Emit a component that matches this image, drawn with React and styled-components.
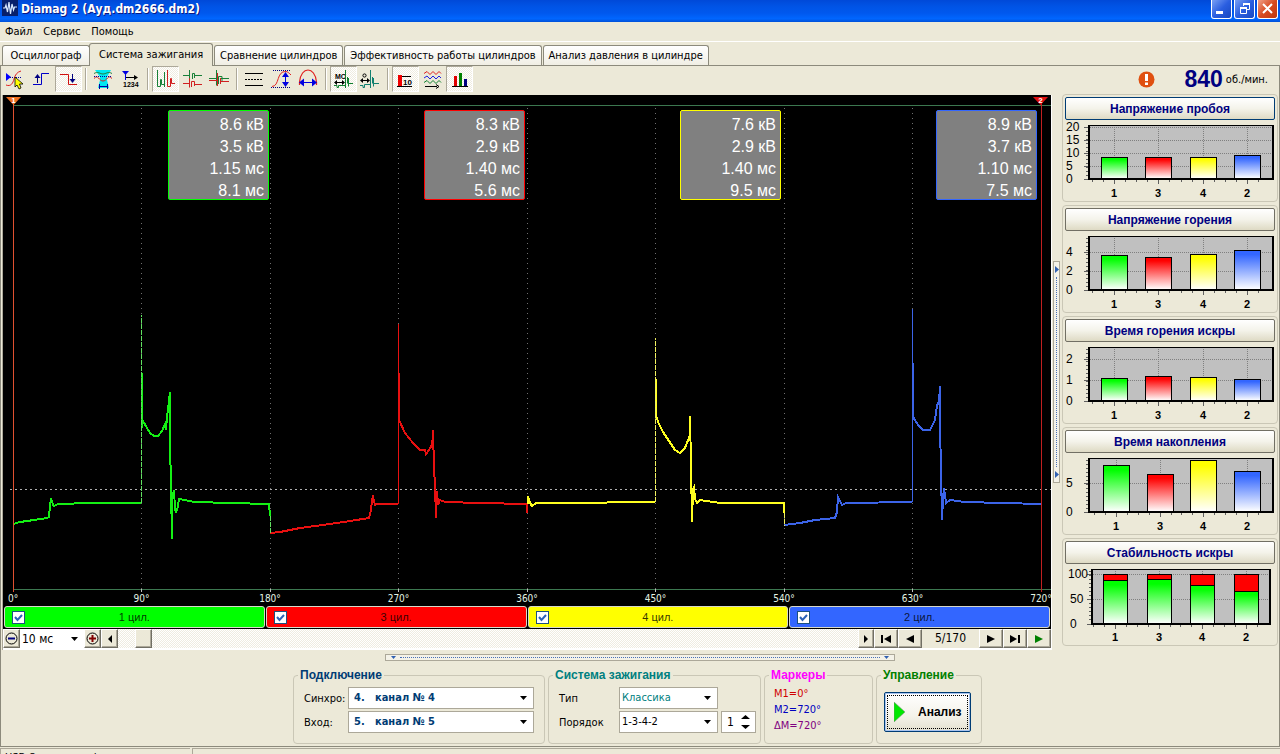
import React, { useState } from "react";
import styled, { createGlobalStyle, css } from "styled-components";

const GlobalStyle = createGlobalStyle`
  * { box-sizing: border-box; }
  body {
    margin: 0;
    background: #ece9d8;
    color: #000;
    font-family: "DejaVu Sans Condensed", "DejaVu Sans", sans-serif;
    font-size: 11px;
  }
  button, input, select { font-family: inherit; font-size: inherit; color: inherit; margin: 0; }
  svg { display: block; flex: none; }
`;

const GREEN = "#00ff00";
const RED = "#ff0000";
const YELLOW = "#ffff00";
const BLUE = "#3366ff";

const hatch = css`
  background: repeating-conic-gradient(#fff 0 25%, #efece0 0 50%) 0 0 / 2px 2px;
`;

const raised = css`
  background: #ece9d8;
  border: 1px solid;
  border-color: #fff #716f64 #716f64 #fff;
  box-shadow: inset -1px -1px 0 #aca899;
`;

const Window = styled.div`
  height: 100vh;
  min-height: 700px;
  display: flex;
  flex-direction: column;
  overflow: hidden;
`;

const TitleBar = styled.header`
  display: flex;
  align-items: flex-start;
  height: 22px;
  padding: 0 2px;
  background: linear-gradient(#0049d8 0, #0054e6 30%, #0058ee 60%, #0066ff 85%, #0050d8 100%);
`;

const Title = styled.h1`
  flex: 1;
  margin: 0 0 0 3px;
  color: #fff;
  font-size: 12px;
  line-height: 18px;
  text-shadow: 1px 1px 0 #0a1883;
`;

const WindowButtons = styled.div`
  display: flex;
  gap: 2px;
`;

const WindowButton = styled.button`
  width: 21px;
  height: 19px;
  padding: 0;
  border: 1px solid #fff;
  border-top: 0;
  border-radius: 0 0 3px 3px;
  background: ${(p) =>
    p.$close
      ? "linear-gradient(135deg, #f0a088, #d84a20 50%, #c03810)"
      : "linear-gradient(135deg, #7aa0f4, #2a5ee0 50%, #1848c0)"};
`;

const MenuBar = styled.nav`
  display: flex;
  align-items: center;
  gap: 11px;
  height: 20px;
  padding: 0 5px;
  border-bottom: 1px solid #fff;
`;

const MenuLink = styled.a`
  color: #000;
  text-decoration: none;
`;

const Tabs = styled.div`
  display: flex;
  align-items: flex-end;
  height: 23px;
  padding-left: 2px;
`;

const Tab = styled.button`
  min-width: 88px;
  height: 20px;
  padding: 0 5px;
  margin-right: 1px;
  border: 1px solid #8c8a7c;
  border-bottom: 0;
  border-radius: 3px 3px 0 0;
  background: linear-gradient(#fff, #f0eee4);
  white-space: nowrap;
  ${(p) =>
    p.$active &&
    css`
      z-index: 1;
      height: 23px;
      padding: 0 9px 2px;
      margin: 0 1px -1px -2px;
      background: #ece9d8;
    `}
`;

const Page = styled.main`
  flex: 1;
  min-height: 0;
  display: flex;
  flex-direction: column;
  border: 1px solid #8c8a7c;
`;

const Toolbar = styled.div`
  display: flex;
  height: 28px;
  padding-right: 11px;
`;

const ToolButton = styled.button`
  width: 27px;
  height: 26px;
  padding: 0;
  border: 1px solid transparent;
  background: none;
  ${(p) =>
    p.$pressed &&
    css`
      ${hatch}
      border-color: #aca899 #fff #fff #aca899;
    `}
  svg { margin: -1px; }
`;

const Separator = styled.span`
  width: 2px;
  height: 22px;
  margin: 2px 3px;
  border-left: 1px solid #aca899;
  border-right: 1px solid #fff;
`;

const Rpm = styled.div`
  display: flex;
  align-items: center;
  height: 26px;
  margin-left: auto;
`;

const RpmValue = styled.strong`
  margin: 0 3px 0 29px;
  color: #000080;
  font: bold 23px "Liberation Sans", sans-serif;
`;

const Workspace = styled.div`
  display: flex;
`;

const ScopeColumn = styled.section`
  flex: 1;
  min-width: 0;
  margin-top: 1px;
  margin-left: 1px;
  border-left: 1px solid #aca899;
  border-right: 1px solid #fff;
`;

const Scope = styled.div`
  position: relative;
  background: #000;
  overflow: hidden;
`;

const Plot = styled.svg`
  width: 100%;
  height: 497px;
`;

const Readouts = styled.div`
  position: absolute;
  top: 15px;
  left: 10px;
  right: 14px;
  display: grid;
  grid-template-columns: repeat(4, 1fr);
  justify-items: end;
`;

const Readout = styled.div`
  width: 101px;
  height: 90px;
  padding: 3px 4px 0 0;
  border: 1px solid ${(p) => p.$color};
  border-radius: 2px;
  background: #808080;
  color: #fff;
  text-align: right;
  font: 16px/22px "Liberation Sans", sans-serif;
`;

const AxisLabels = styled.div`
  display: flex;
  justify-content: space-between;
  height: 14px;
  padding: 0 10px;
  color: #e4f4e4;
  font-size: 10px;
  line-height: 14px;
`;

const AxisLabel = styled.span`
  display: flex;
  justify-content: center;
  width: 0;
`;

const MarkerFlag = styled.span`
  position: absolute;
  top: 2px;
  ${(p) => (p.$right ? "right: 3px" : "left: 3px")};
  width: 15px;
  height: 8px;
  clip-path: polygon(0 0, 100% 0, 50% 100%);
  background: ${(p) => p.$color};
  color: #fff;
  font: bold 8px/7px "Liberation Sans", sans-serif;
  text-align: center;
`;

const Cylinders = styled.div`
  display: grid;
  grid-template-columns: repeat(4, 1fr);
  gap: 1px;
  padding: 0 1px 1px;
`;

const Cylinder = styled.label`
  display: flex;
  align-items: center;
  height: 22px;
  padding: 0 20px 0 7px;
  border: 1px solid #d8d8c8;
  border-radius: 3px;
  background: ${(p) => p.$color};
  color: rgba(0, 0, 0, 0.8);
  span { flex: 1; text-align: center; font: 11px "Liberation Sans", sans-serif; }
`;

const Check = styled.input`
  appearance: none;
  width: 13px;
  height: 13px;
  border: 1px solid #1c5180;
  background: #fff;
  &:checked {
    background: #fff url("data:image/svg+xml,%3Csvg xmlns='http://www.w3.org/2000/svg' width='11' height='11'%3E%3Cpath d='M2 5 L4.5 8 L9 3' fill='none' stroke='%232c62b8' stroke-width='2'/%3E%3C/svg%3E") center no-repeat;
  }
`;

const ScrollRow = styled.div`
  display: flex;
  height: 21px;
  padding-bottom: 2px;
  background: #fff;
`;

const StepButton = styled.button`
  display: flex;
  align-items: center;
  justify-content: center;
  width: ${(p) => p.$width}px;
  padding: 0;
  ${raised}
`;

const arrow = css`
  appearance: none;
  background: #fff url("data:image/svg+xml,%3Csvg xmlns='http://www.w3.org/2000/svg' width='7' height='4'%3E%3Cpath d='M0 0 H7 L3.5 4 Z'/%3E%3C/svg%3E") right 6px center no-repeat;
`;

const ScaleSelect = styled.select`
  ${arrow}
  width: 64px;
  padding: 0 2px;
  border: 0;
  font-size: 12px;
`;

const FrameSlider = styled.input`
  appearance: none;
  flex: 1;
  min-width: 0;
  height: 19px;
  ${hatch}
  &::-webkit-slider-thumb {
    appearance: none;
    width: 17px;
    height: 19px;
    ${raised}
  }
`;

const FrameCounter = styled.output`
  width: 57px;
  background: #ece9d8;
  text-align: center;
  font-size: 12px;
  line-height: 19px;
`;

const SideSplitter = styled.div`
  display: flex;
  flex-direction: column;
  justify-content: space-between;
  align-items: center;
  align-self: center;
  width: 7px;
  height: 222px;
  margin: 0 2px 0 1px;
  padding: 4px 0;
  border: 1px solid #aca899;
  background: #f4f2e8;
`;

const SideDots = styled.i`
  flex: 1;
  margin: 4px 0;
  border-left: 1px dotted #4870b8;
`;

const BottomSplitter = styled.div`
  display: flex;
  align-items: center;
  align-self: center;
  width: 510px;
  height: 7px;
  margin-top: 4px;
  padding: 0 5px;
  border: 1px solid #aca899;
  background: #f4f2e8;
`;

const BottomDots = styled.i`
  flex: 1;
  margin: 0 4px;
  border-top: 1px dotted #4870b8;
`;

const Sidebar = styled.aside`
  display: flex;
  flex-direction: column;
  gap: 3px;
  width: 216px;
  margin-right: 1px;
`;

const ChartCard = styled.section`
  height: 108px;
  padding: 2px;
  border: 1px solid #cac7b6;
  border-radius: 4px;
`;

const ChartButton = styled.button`
  display: block;
  width: 100%;
  height: 23px;
  padding: 0;
  border: 1px solid ${(p) => (p.$focused ? "#003c74" : "#716f64")};
  border-radius: 2px;
  background: linear-gradient(#fff, #f4f3ea 50%, #dedac4);
  color: #000080;
  font: bold 12px "Liberation Sans", sans-serif;
`;

const ChartText = styled.text`
  font: ${(p) => (p.$bold ? "bold 11px" : "12px")} "Liberation Sans", sans-serif;
`;

const Groups = styled.div`
  display: flex;
  justify-content: center;
  gap: 3px;
  margin-top: 8px;
  padding-right: 5px;
`;

const Group = styled.fieldset`
  width: ${(p) => p.$width}px;
  height: 75px;
  margin: 0;
  padding: 6px 10px 0;
  border: 1px solid #cac7b6;
  border-radius: 4px;
  legend {
    margin-left: -6px;
    padding: 0 2px;
    color: ${(p) => p.$color};
    font: bold 12px/12px "Liberation Sans", sans-serif;
  }
`;

const Field = styled.div`
  display: flex;
  align-items: center;
  height: 22px;
  margin-bottom: 2px;
  label { flex: 1; white-space: nowrap; }
`;

const Select = styled.select`
  ${arrow}
  width: ${(p) => p.$width}px;
  height: 22px;
  padding: 0 2px 2px ${(p) => (p.$bold ? 5 : 2)}px;
  border: 1px solid #aca899;
  border-radius: 0;
  color: ${(p) => p.$color};
  font-size: 11px;
  font-weight: ${(p) => (p.$bold ? "bold" : "normal")};
  white-space: pre;
`;

const Spin = styled.div`
  display: flex;
  align-items: center;
  width: 35px;
  height: 22px;
  margin: 0 -6px 0 3px;
  border: ${(p) => (p.$empty ? 0 : "1px solid #aca899")};
  background: ${(p) => (p.$empty ? "none" : "#fff")};
  input {
    appearance: textfield;
    flex: 1;
    min-width: 0;
    width: 17px;
    padding: 0 0 0 5px;
    border: 0;
    background: none;
    font-size: 12px;
    outline: 0;
  }
  input::-webkit-inner-spin-button { display: none; }
  svg { margin-right: 5px; }
`;

const MarkerValue = styled.p`
  margin: -1px 0 2px -1px;
  color: ${(p) => p.$color};
  line-height: 15px;
`;

const RunButton = styled.button`
  display: flex;
  align-items: center;
  gap: 13px;
  width: 87px;
  height: 40px;
  margin: 5px 0 0 -3px;
  padding: 0 9px;
  border: 1px solid #003c74;
  border-radius: 2px;
  background: linear-gradient(#fff, #f4f3ea 60%, #e4e1d0);
  box-shadow: inset 0 0 0 1px #a8c4f0;
  outline: 1px dotted #000;
  outline-offset: -4px;
  font: bold 12px "Liberation Sans", sans-serif;
`;

const StatusBar = styled.footer`
  display: grid;
  grid-template-columns: 190px 1fr;
  gap: 2px;
  height: 6px;
  margin-top: 1px;
`;

const StatusCell = styled.span`
  height: 18px;
  padding-left: 4px;
  border-top: 1px solid #aca899;
  border-left: 1px solid #aca899;
  line-height: 18px;
`;

const AppLogo = () => (
  <svg width="16" height="16" viewBox="0 0 16 16">
    <rect width="16" height="16" fill="#08206c" />
    <path d="M1 8 H3 L4 5 L5.5 12 L7 2 L8.5 14 L10 4 L11.5 10 L12.5 7 H15" fill="none" stroke="#d8e8ff" strokeWidth="1.2" />
  </svg>
);

const icons = {
  sync: (
    <>
      <path d="M5 7 V15 L10 11 Z" fill="#0000ff" />
      <path d="M9 11.5 H21" stroke="#0000a0" strokeDasharray="1 1" />
      <path d="M5 19 C10 21 12 17 13 13 S16 6 20 5" stroke="#e02020" fill="none" />
      <path d="M14 11 V21 L16 19 L18 23 L20 22 L18.5 18 H22 Z" fill="#ffff00" stroke="#000" strokeWidth=".8" />
    </>
  ),
  rise: (
    <>
      <path d="M5 18.5 H13.5 V7.5 H21" stroke="#0000c8" fill="none" />
      <path d="M9.5 17 V9" stroke="#000080" /><path d="M6.5 12 L9.5 8 L12.5 12 Z" fill="#000080" />
    </>
  ),
  fall: (
    <>
      <path d="M5 8.5 H13.5 V18.5 H22" stroke="#d01010" fill="none" />
      <path d="M17.5 8 V16" stroke="#000080" /><path d="M14.5 13 L17.5 17 L20.5 13 Z" fill="#000080" />
    </>
  ),
  funnel: (
    <>
      <path d="M5 4 H21 L17 11 V14 L19 22 H8 L10 14 V11 Z" fill="#00e8f0" />
      <path d="M4 7.5 C8 5 10 8 13 8 S18 5 22 7.5" stroke="#208040" fill="none" />
      <path d="M4 12.5 C8 8 9 15 13 15 S18 8 22 12.5" stroke="#d02020" fill="none" />
      <path d="M4 10.5 H22" stroke="#0000a0" strokeDasharray="1 1" />
      <path d="M9 20.5 H18 M9.5 18 V23 M17.5 18 V23" stroke="#0000a0" />
    </>
  ),
  order: (
    <>
      <path d="M5 5 H12 L8.5 9 Z" fill="#0000e0" />
      <path d="M8.5 7 V14" stroke="#0000e0" />
      <path d="M9 11.5 H18" stroke="#000" /><path d="M17 9 L21 11.5 L17 14 Z" />
      <text x="6" y="21" fontSize="7" fontFamily="Liberation Sans" fontWeight="bold">1234</text>
    </>
  ),
  sequence: (
    <>
      <path d="M5.5 4 V20.5 H8.5 V13.5 H9.5 V18.5 H12.5 V6 V21" stroke="#188038" fill="none" />
      <path d="M15.5 4 V20.5 H18.5 V12.5 H19.5 V17.5 H23" stroke="#d02020" fill="none" />
    </>
  ),
  parade: (
    <>
      <path d="M4 9.5 H10.5 V4 V13.5 M13.5 13 V7.5 H15.5 V12 M15 9.5 H23" stroke="#188038" fill="none" />
      <path d="M4 17.5 H10.5 V12.5 V21.5 M12.5 21 V15.5 H15.5 V20 M15 18.5 H23" stroke="#d02020" fill="none" />
    </>
  ),
  overlay: (
    <>
      <path d="M3 12.5 H10.5 V4 V19.5 M12.5 18 V10.5 H16 V15 M15 12.5 H23" stroke="#188038" fill="none" />
      <path d="M3 14.5 H11.5 V7 V20 M14.5 18 V12 M14 15.5 H23" stroke="#d02020" fill="none" />
    </>
  ),
  lines: (
    <>
      <path d="M4 7.5 H22 M4 19.5 H22" stroke="#000" />
      <path d="M4 13.5 H22" stroke="#000" strokeDasharray="2 1" />
    </>
  ),
  height: (
    <>
      <path d="M4 20.5 C12 20 8 5 18 5.5 C20 6 21 7 23 9" stroke="#e02020" fill="none" />
      <path d="M5 4.5 H22 M3 21.5 H22" stroke="#000080" strokeDasharray="1 1" />
      <path d="M17.5 8 V19" stroke="#0000e0" />
      <path d="M14 11 L17.5 6 L21 11 Z M14 16 L17.5 21 L21 16 Z" fill="#0000e0" />
    </>
  ),
  width: (
    <>
      <path d="M4.5 19 V16 C6 0 20 0 21.5 16 V19" stroke="#e02020" fill="none" strokeWidth="1.2" />
      <path d="M8 16.5 H18" stroke="#0000e0" />
      <path d="M9 12.5 L4 16.5 L9 20.5 Z M17 12.5 L22 16.5 L17 20.5 Z" fill="#0000e0" />
    </>
  ),
  duration: (
    <>
      <text x="5" y="13" fontSize="7" fontFamily="Liberation Sans" fontWeight="bold">МС</text>
      <path d="M6 16.5 H14" stroke="#000" /><path d="M7 14 L4 16.5 L7 19 Z M12 14 L15 16.5 L12 19 Z" />
      <path d="M4 19.5 H7 V21.5 H8.5 V19.5 H15.5 V4 V22 M17.5 11 V17.5 M18.5 12 V20.5 M19 17.5 H23" stroke="#108030" fill="none" />
    </>
  ),
  angle: (
    <>
      <circle cx="7.5" cy="9.5" r="1.6" stroke="#000" fill="none" />
      <path d="M5 14.5 H11" stroke="#000" /><path d="M6 12 L3 14.5 L6 17 Z M10 12 L13 14.5 L10 17 Z" />
      <path d="M3 19.5 H6 V21.5 H7.5 V18.5 H13.5 V4 V22 M15.5 11 V17.5 M16.5 12 V20.5 M17 17.5 H22" stroke="#108070" fill="none" />
    </>
  ),
  ten: (
    <>
      <rect x="6" y="9" width="4" height="11" fill="#f00000" />
      <path d="M10 10.5 H19 M5 20.5 H20" stroke="#000" />
      <text x="11" y="19" fontSize="8" fontFamily="Liberation Sans" fontWeight="bold">10</text>
    </>
  ),
  waves: (
    <>
      <path d="M5 7.5 L8 5.5 L11 8.5 L14 5.5 L17 8.5 L20 5.5 L22 7.5" stroke="#e02020" fill="none" />
      <path d="M5 12 L8 10 L11 13 L14 10 L17 13 L20 10 L22 12" stroke="#2020e0" fill="none" />
      <path d="M5 16.5 L8 14.5 L11 17.5 L14 14.5 L17 17.5 L20 14.5 L22 16.5" stroke="#108030" fill="none" />
      <path d="M6 20.5 H18 M17 18.5 L20 20.5 L17 22.5" stroke="#000" fill="none" />
    </>
  ),
  bars: (
    <>
      <rect x="8" y="10" width="3" height="10" fill="#e00000" />
      <rect x="13" y="7" width="3" height="13" fill="#008000" />
      <rect x="18" y="13" width="3" height="7" fill="#000080" />
      <path d="M6 20.5 H22" stroke="#000" />
    </>
  ),
};

const toolGroups = [
  [["sync", "Синхронизация"], ["rise", "Фронт"], ["fall", "Спад", true]],
  [["funnel", "Фильтр"], ["order", "Порядок"]],
  [["sequence", "Последовательно", true], ["parade", "Растр"], ["overlay", "Наложение"]],
  [["lines", "Линии"], ["height", "Амплитуда"], ["width", "Ширина"]],
  [["duration", "Миллисекунды", true], ["angle", "Градусы"]],
  [["ten", "Значения", true], ["waves", "Осциллограммы"], ["bars", "Диаграммы", true]],
];

const tabs = [
  "Осциллограф",
  "Система зажигания",
  "Сравнение цилиндров",
  "Эффективность работы цилиндров",
  "Анализ давления в цилиндре",
];

const cylinders = [
  { name: "1 цил.", color: GREEN, values: ["8.6 кВ", "3.5 кВ", "1.15 мс", "8.1 мс"] },
  { name: "3 цил.", color: RED, values: ["8.3 кВ", "2.9 кВ", "1.40 мс", "5.6 мс"] },
  { name: "4 цил.", color: YELLOW, values: ["7.6 кВ", "2.9 кВ", "1.40 мс", "9.5 мс"] },
  { name: "2 цил.", color: BLUE, values: ["8.9 кВ", "3.7 кВ", "1.10 мс", "7.5 мс"] },
];

const traces = [
  { color: "#14f014", d: "M13 524 L20 522 L34 520 L47 518 L49 517 L50 506 L51 498 L53 505 L54 506 L58 504 L90 503 H141 M142 373 V428 L143 421 L147 428 L150 433 L154 436 L158 436 L162 431 L165 424 L166 430 L167 417 L169 401 L170 392 L170 440 L171 488 L172 539 V500 L174 490 L175 508 L176 513 L178 506 L179 499 L195 502 L230 503 L269 504 L270 516" },
  { color: "#e81010", d: "M270 533 L280 532 L300 528 L330 524 L350 521 L369 518 L371 510 L372 500 L373 497 L375 505 L377 504 H398 M399 373 V420 L405 433 L413 443 L420 450 H425 L426 454 L431 447 L433 438 V430 L434 468 L435 485 L436 518 L437 491 L438 505 L440 500 L445 502 L480 503 L527 504 V513" },
  { color: "#ffff20", d: "M528 504 V496 L530 503 L532 506 L536 503 L560 503 L655 502 M656 379 V415 L658 422 L663 432 L669 441 L675 450 L680 453 L685 448 L690 435 V416 L691 465 L692 522 L693 489 L694 487 L695 499 L697 503 L700 500 L720 503 L784 503 V513" },
  { color: "#3c64e8", d: "M784 525 L800 523 L815 520 L835 518 L837 512 L838 497 L840 501 L842 505 L846 503 L912 502 M913 363 V415 L914 419 L919 426 L923 430 H930 L935 420 L937 405 L939 402 L940 386 V425 L941 470 L942 520 L943 498 L944 488 L946 503 L950 500 L965 502 L1041 504" },
];

// one pixel wide ignition peaks and cylinder changes
const spikes = [
  { color: "#60e060", d: "M141.5 503 V315 M270.5 516 V533", dash: "5 1" },
  { color: "#e81010", d: "M398.5 504 V324" },
  { color: "#f0f060", d: "M655.5 502 V338 M784.5 513 V526", dash: "5 1" },
  { color: "#3c64e8", d: "M912.5 502 V309" },
];

const degrees = [0, 90, 180, 270, 360, 450, 540, 630, 720];
const gridX = [141, 270, 398, 527, 655, 784, 912];

const charts = [
  { title: "Напряжение пробоя", unit: 2.6, ticks: [0, 5, 10, 15, 20], values: [8.6, 8.6, 8.6, 9.2], centers: [49, 93, 138, 182] },
  { title: "Напряжение горения", unit: 9.5, ticks: [0, 2, 4], values: [3.7, 3.5, 3.8, 4.2], centers: [49, 93, 138, 182] },
  { title: "Время горения искры", unit: 21, ticks: [0, 1, 2], values: [1.1, 1.2, 1.15, 1.05], centers: [49, 93, 138, 182] },
  { title: "Время накопления", unit: 5.8, ticks: [0, 5], values: [8.1, 6.6, 9, 7.1], centers: [51, 95, 138, 182] },
  { title: "Стабильность искры", unit: 0.5, ticks: [0, 50, 100], values: [88, 90, 78, 66], centers: [50, 94, 137, 181], stacked: true },
];

function Chart({ unit, ticks, values, centers, stacked }) {
  const left = stacked ? 26 : 23;
  const right = stacked ? 205 : 208;
  const bottom = stacked ? 60 : 59;
  const barWidth = stacked ? 24 : 26;
  const y = (v) => Math.round(bottom - v * unit);
  return (
    <svg width="210" height="79" shapeRendering="crispEdges">
      <rect x={left} y="5" width={right - left} height={bottom - 5} fill="#c0c0c0" />
      {ticks.map((t) => (
        <g key={t}>
          <path d={`M${left} ${y(t) + 0.5} H${right}`} stroke="#808080" strokeDasharray="1 1" />
          <path d={`M${left - 4} ${y(t) + 0.5} h4`} stroke="#606060" />
          <ChartText x={stacked ? (t === 100 ? 3 : 5) : 1} y={y(t) + 4}>{t}</ChartText>
        </g>
      ))}
      {centers.map((x) => (
        <path key={x} d={`M${x + 0.5} 5 V${bottom}`} stroke="#808080" strokeDasharray="1 1" />
      ))}
      {values.map((v, i) => (
        <g key={i} stroke="#000">
          {stacked && (
            <rect x={centers[i] - 11.5} y={y(100) + 0.5} width={barWidth} height="49" fill={RED} />
          )}
          <rect
            x={centers[i] - barWidth / 2 + 0.5}
            y={y(v) + 0.5}
            width={barWidth}
            height={bottom - 1 - y(v)}
            fill={`url(#bar${stacked ? 0 : i})`}
          />
        </g>
      ))}
      <path d={`M${left} 5.5 H${right}`} stroke="#000" />
      <path
        d={`M${left + 1} 5 V${bottom + 1} M${right} 5 V${bottom + 1} M${left} ${bottom} H${right + 1}`}
        stroke="#000"
        strokeWidth="2"
      />
      <path d={`M${left - 1} 7 V${bottom - 1}`} stroke="#606060" strokeWidth="2" strokeDasharray="1 3" />
      {centers.map((x, i) => (
        <g key={x} transform={`translate(${x} ${bottom + 1})`}>
          <path d="M-21.5 0 v2 M-10.5 0 v2 M.5 0 v4 M11.5 0 v2" stroke="#606060" />
          <ChartText $bold x="0" y={77 - bottom - 1} textAnchor="middle">{[1, 3, 4, 2][i]}</ChartText>
        </g>
      ))}
    </svg>
  );
}

const Gradients = () => (
  <svg width="0" height="0" style={{ position: "absolute" }}>
    {[GREEN, RED, YELLOW, BLUE].map((c, i) => (
      <linearGradient key={c} id={`bar${i}`} x2="0" y2="1">
        <stop offset=".1" stopColor={c} />
        <stop offset="1" stopColor="#fff" />
      </linearGradient>
    ))}
  </svg>
);

const Glyph = ({ d, fill = "#000" }) => (
  <svg width="12" height="10"><path d={d} fill={fill} /></svg>
);

const Zoom = ({ plus }) => (
  <svg width="13" height="13">
    <circle cx="6.5" cy="6.5" r="5.5" fill="none" stroke="#000" />
    <path d={plus ? "M3 6.5 H10 M6.5 3 V10" : "M3 6.5 H10"} stroke={plus ? "#800000" : "#000080"} strokeWidth="2" />
  </svg>
);

const SplitArrow = ({ d }) => (
  <svg width="5" height="7"><path d={d} fill="#3060b0" /></svg>
);

export default function App() {
  const [tab, setTab] = useState(1);
  const [frame, setFrame] = useState(5);

  return (
    <Window>
      <GlobalStyle />
      <Gradients />
      <TitleBar>
        <AppLogo />
        <Title>Diamag 2 (Ауд.dm2666.dm2)</Title>
        <WindowButtons>
          <WindowButton aria-label="Свернуть">
            <svg width="19" height="18"><path d="M4 12.5 H11" stroke="#fff" strokeWidth="3" /></svg>
          </WindowButton>
          <WindowButton aria-label="Развернуть">
            <svg width="19" height="18" fill="none" stroke="#fff">
              <path d="M8.5 6 V3.5 H14.5 V9.5 H12" /><path d="M8 4 H15" strokeWidth="2" />
              <path d="M5.5 7.5 H11.5 V13.5 H5.5 Z" /><path d="M5 8 H12" strokeWidth="2" />
            </svg>
          </WindowButton>
          <WindowButton $close aria-label="Закрыть">
            <svg width="19" height="18"><path d="M5 4 L14 13 M14 4 L5 13" stroke="#fff" strokeWidth="2" /></svg>
          </WindowButton>
        </WindowButtons>
      </TitleBar>
      <MenuBar>
        <MenuLink href="#file">Файл</MenuLink>
        <MenuLink href="#service">Сервис</MenuLink>
        <MenuLink href="#help">Помощь</MenuLink>
      </MenuBar>
      <Tabs>
        {tabs.map((name, i) => (
          <Tab key={name} $active={i === tab} onClick={() => setTab(i)}>{name}</Tab>
        ))}
      </Tabs>
      <Page>
        <Toolbar>
          {toolGroups.map((group, g) => (
            <React.Fragment key={g}>
              {g > 0 && <Separator />}
              {group.map(([icon, label, pressed]) => (
                <ToolButton key={icon} $pressed={pressed} aria-label={label}>
                  <svg width="27" height="26">{icons[icon]}</svg>
                </ToolButton>
              ))}
            </React.Fragment>
          ))}
          <Rpm>
            <svg width="17" height="17">
              <circle cx="8.5" cy="8.5" r="8" fill="#e05010" />
              <path d="M8.5 3 V10 M8.5 11.5 V14" stroke="#fff" strokeWidth="3" />
            </svg>
            <RpmValue>840</RpmValue>
            об./мин.
          </Rpm>
        </Toolbar>
        <Workspace>
          <ScopeColumn>
            <Scope>
              <Plot viewBox="3 95 1048 497" preserveAspectRatio="none" shapeRendering="crispEdges">
                <path d="M13 105.5 H1051 M13 589.5 H1051" stroke="#3c7850" />
                {gridX.map((x) => (
                  <g key={x}>
                    <path d={`M${x + 0.5} 108 V589`} stroke="#707070" strokeDasharray="1 4" />
                    <path d={`M${x + 0.5} 589 V592`} stroke="#c0c0c0" />
                  </g>
                ))}
                <path d="M10 489.5 H1051" stroke="#b0b0b0" strokeDasharray="2 3" />
                {traces.map((t) => (
                  <path key={t.color} d={t.d} stroke={t.color} strokeWidth="2" fill="none" />
                ))}
                {spikes.map((t) => (
                  <path key={t.color} d={t.d} stroke={t.color} strokeDasharray={t.dash} fill="none" />
                ))}
                <path d="M13.5 97 V592" stroke="#e05030" />
                <path d="M1041.5 97 V592" stroke="#c02020" />
              </Plot>
              <MarkerFlag $color="#f07020">1</MarkerFlag>
              <MarkerFlag $color="#e01010" $right>2</MarkerFlag>
              <Readouts>
                {cylinders.map((c) => (
                  <Readout key={c.name} $color={c.color}>
                    {c.values.map((v) => <div key={v}>{v}</div>)}
                  </Readout>
                ))}
              </Readouts>
              <AxisLabels>
                {degrees.map((d) => <AxisLabel key={d}>{d}°</AxisLabel>)}
              </AxisLabels>
              <Cylinders>
                {cylinders.map((c) => (
                  <Cylinder key={c.name} $color={c.color}>
                    <Check type="checkbox" defaultChecked />
                    <span>{c.name}</span>
                  </Cylinder>
                ))}
              </Cylinders>
            </Scope>
            <ScrollRow>
              <StepButton $width={17} aria-label="Уменьшить"><Zoom /></StepButton>
              <ScaleSelect aria-label="Масштаб"><option>10 мс</option></ScaleSelect>
              <StepButton $width={17} aria-label="Увеличить"><Zoom plus /></StepButton>
              <StepButton $width={17} aria-label="Влево"><Glyph d="M8 1 V9 L4 5 Z" /></StepButton>
              <FrameSlider
                type="range"
                min="1"
                max="170"
                value={frame}
                onChange={(e) => setFrame(e.target.value)}
                aria-label="Кадр"
              />
              <StepButton $width={16} aria-label="Вправо"><Glyph d="M4 1 V9 L8 5 Z" /></StepButton>
              <StepButton $width={24} aria-label="Первый" onClick={() => setFrame(1)}>
                <Glyph d="M1 1 H3 V9 H1 Z M11 1 V9 L4 5 Z" />
              </StepButton>
              <StepButton $width={24} aria-label="Предыдущий"><Glyph d="M10 1 V9 L2 5 Z" /></StepButton>
              <FrameCounter>{frame}/170</FrameCounter>
              <StepButton $width={24} aria-label="Следующий"><Glyph d="M2 1 V9 L10 5 Z" /></StepButton>
              <StepButton $width={24} aria-label="Последний" onClick={() => setFrame(170)}>
                <Glyph d="M9 1 H11 V9 H9 Z M1 1 V9 L8 5 Z" />
              </StepButton>
              <StepButton $width={24} aria-label="Воспроизвести">
                <Glyph d="M2 1 V9 L10 5 Z" fill="#008000" />
              </StepButton>
            </ScrollRow>
          </ScopeColumn>
          <SideSplitter>
            <SplitArrow d="M1 0 V7 L5 3.5 Z" />
            <SideDots />
            <SplitArrow d="M1 0 V7 L5 3.5 Z" />
          </SideSplitter>
          <Sidebar>
            {charts.map((c, i) => (
              <ChartCard key={c.title}>
                <ChartButton $focused={i === 0}>{c.title}</ChartButton>
                <Chart {...c} />
              </ChartCard>
            ))}
          </Sidebar>
        </Workspace>
        <BottomSplitter>
          <SplitArrow d="M0 2 H5 L2.5 5 Z" />
          <BottomDots />
          <SplitArrow d="M0 2 H5 L2.5 5 Z" />
        </BottomSplitter>
        <Groups>
          <Group $width={252} $color="#003c74">
            <legend>Подключение</legend>
            <Field>
              <label htmlFor="sync">Синхро:</label>
              <Select id="sync" $width={186} $bold $color="#003c74"><option>4.&nbsp;&nbsp; канал № 4</option></Select>
            </Field>
            <Field>
              <label htmlFor="input">Вход:</label>
              <Select id="input" $width={186} $bold $color="#003c74"><option>5.&nbsp;&nbsp; канал № 5</option></Select>
            </Field>
          </Group>
          <Group $width={213} $color="#008080">
            <legend>Система зажигания</legend>
            <Field>
              <label htmlFor="type">Тип</label>
              <Select id="type" $width={99} $color="#008080"><option>Классика</option></Select>
              <Spin $empty />
            </Field>
            <Field>
              <label htmlFor="order">Порядок</label>
              <Select id="order" $width={99} $color="#000"><option>1-3-4-2</option></Select>
              <Spin>
                <input type="number" defaultValue={1} aria-label="Первый цилиндр" />
                <svg width="9" height="14"><path d="M0 4 L4.5 0 L9 4 Z M0 10 L4.5 14 L9 10 Z" /></svg>
              </Spin>
            </Field>
          </Group>
          <Group $width={109} $color="#ff00ff">
            <legend>Маркеры</legend>
            <MarkerValue $color="#d00000">М1=0°</MarkerValue>
            <MarkerValue $color="#0000c0">М2=720°</MarkerValue>
            <MarkerValue $color="#800080">ΔМ=720°</MarkerValue>
          </Group>
          <Group $width={105} $color="#008000">
            <legend>Управление</legend>
            <RunButton>
              <svg width="11" height="20"><path d="M0 0 L11 10 L0 20 Z" fill="#00e800" stroke="#808080" strokeWidth=".5" /></svg>
              Анализ
            </RunButton>
          </Group>
        </Groups>
      </Page>
      <StatusBar>
        <StatusCell>USB Осциллограф</StatusCell>
        <StatusCell />
      </StatusBar>
    </Window>
  );
}
